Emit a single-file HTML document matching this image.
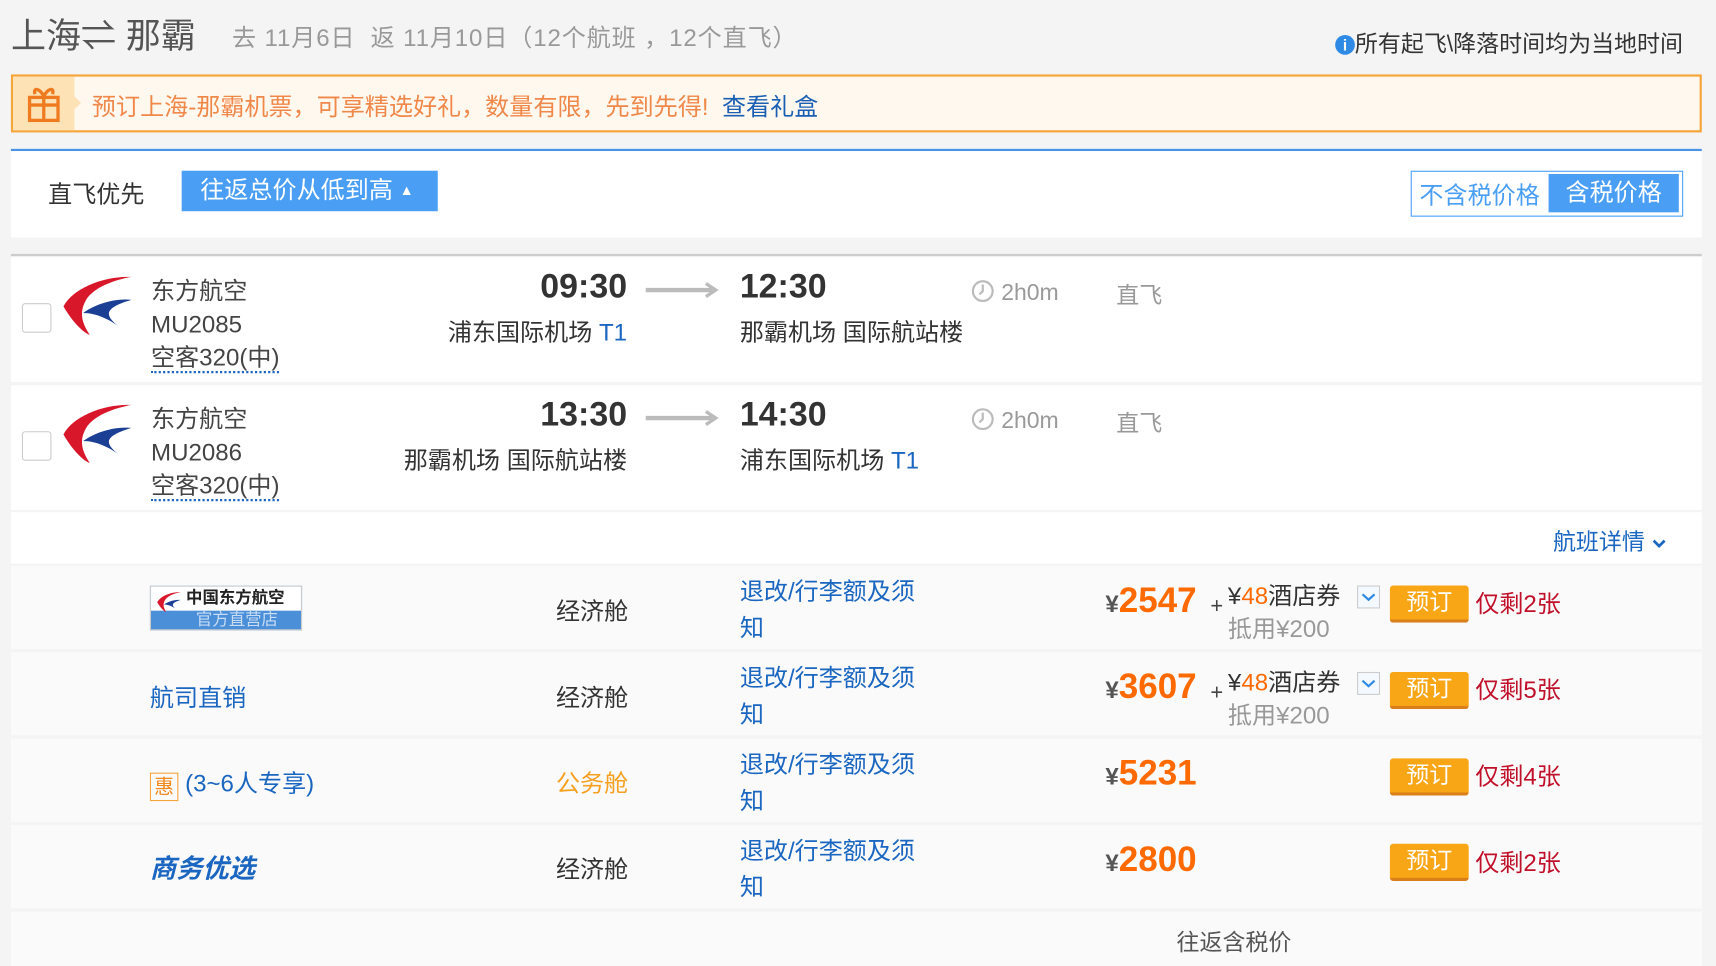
<!DOCTYPE html>
<html><head><meta charset="utf-8"><style>
html,body{margin:0;padding:0;width:1716px;height:966px;overflow:hidden;background:#f4f4f4}
#w{position:absolute;left:0;top:0;width:1568px;height:883px;transform:scale(1.0944);transform-origin:0 0;font-family:"Liberation Sans","Noto Sans CJK SC",sans-serif;color:#333}
.a{position:absolute;white-space:nowrap}
.blue{color:#1a66c0}
.row{position:absolute;left:10px;width:1545px;background:#fff}
.sub{position:absolute;left:10px;width:1545px;background:#fafafa;height:76px}
.btn{position:absolute;left:1270px;width:72px;height:31px;background:#f9a616;border-bottom:3px solid #d9801a;border-radius:3px;color:#fff;font-size:21px;text-align:center;line-height:32px}
.left{position:absolute;left:1348px;color:#c0102a;font-size:21px}
.price{position:absolute;left:1010px;font-weight:bold;color:#ff6a00;font-size:32px}
.price b{font-size:22px;color:#555}
.chk{position:absolute;left:1240px;width:19px;height:19px;border:1px solid #ccc;background:#f4f9ff}
</style></head><body><div id="w">
<div class="a" style="left:10px;top:8px;font-size:32px;color:#555">上海⇌ 那霸</div>
<div class="a" style="left:212px;top:17px;font-size:22px;color:#999;letter-spacing:0.8px">去 11月6日 &nbsp;返 11月10日（12个航班 ，12个直飞）</div>
<div class="a" style="left:1220px;top:24px;font-size:21px;color:#333"><span style="display:inline-block;width:18px;height:18px;border-radius:50%;background:#2f8ae5;color:#fff;font-size:14px;text-align:center;line-height:18px;font-weight:bold;vertical-align:1px">i</span>所有起飞\降落时间均为当地时间</div>
<div class="a" style="left:10px;top:68px;width:1541px;height:49px;border:2px solid #f5a53a;background:#fff8ee"></div>
<div class="a" style="left:12px;top:70px;width:56px;height:49px;background:#fde2b5"></div>
<div class="a" style="left:68px;top:88px;width:0;height:0;border-top:6px solid transparent;border-bottom:6px solid transparent;border-left:6px solid #fde2b5"></div>
<svg class="a" style="left:24px;top:76px" width="32" height="36" viewBox="0 0 32 36"><g fill="none" stroke="#f07a20" stroke-width="3"><rect x="3" y="13" width="26" height="21"/><line x1="3" y1="20" x2="29" y2="20"/><line x1="16" y1="13" x2="16" y2="34"/><path d="M16 12C12 4 6 4 8 10M16 12C20 4 26 4 24 10"/></g></svg>
<div class="a" style="left:84px;top:80px;font-size:22px;color:#f0884a">预订上海-那霸机票，可享精选好礼，数量有限，先到先得! &nbsp;<span class="blue" style="color:#1a5fb4">查看礼盒</span></div>
<div class="a" style="left:10px;top:136px;width:1545px;height:79px;background:#fff;border-top:2px solid #4a93e6"></div>
<div class="a" style="left:44px;top:160px;font-size:22px">直飞优先</div>
<div class="a" style="left:166px;top:156px;width:234px;height:37px;background:#4a9ff5;color:#fff;font-size:22px;line-height:35px;padding-left:17px;box-sizing:border-box">往返总价从低到高 <span style="font-size:13px;position:relative;top:-3px">▲</span></div>
<div class="a" style="left:1289px;top:156px;width:247px;height:40px;border:1px solid #4a9ff5;background:#fff"></div>
<div class="a" style="left:1297px;top:161px;font-size:22px;color:#4a9ff5">不含税价格</div>
<div class="a" style="left:1415px;top:159px;width:119px;height:35px;background:#4a9ff5;color:#fff;font-size:22px;line-height:33px;text-align:center">含税价格</div>
<div class="a" style="left:10px;top:232px;width:1545px;height:2px;background:#ccc"></div>
<div class="row" style="top:235px;height:114px"></div>
<div class="row" style="top:352px;height:114px"></div>
<div class="row" style="top:468px;height:47px"></div>
<div class="sub" style="top:517px"></div><div class="sub" style="top:596px"></div><div class="sub" style="top:675px"></div><div class="sub" style="top:754px"></div><div class="sub" style="top:833px;height:50px"></div>

<div class="a" style="left:20px;top:277px;width:25px;height:25px;border:1px solid #ccc;border-radius:3px;background:#fff"></div>
<div class="a" style="left:20px;top:394px;width:25px;height:25px;border:1px solid #ccc;border-radius:3px;background:#fff"></div>
<svg class="a" style="left:54px;top:250px" width="68" height="58" viewBox="0 0 68 58"><path d="M66 3C40 2 12 14 4 30c8 14 18 24 24 26C20 44 18 34 26 22 34 12 50 6 66 3Z" fill="#d9172a"/><path d="M66 24C48 22 30 30 22 36c12 0 24 6 32 12C42 38 40 32 66 24Z" fill="#1b3f94"/></svg>
<svg class="a" style="left:54px;top:367px" width="68" height="58" viewBox="0 0 68 58"><path d="M66 3C40 2 12 14 4 30c8 14 18 24 24 26C20 44 18 34 26 22 34 12 50 6 66 3Z" fill="#d9172a"/><path d="M66 24C48 22 30 30 22 36c12 0 24 6 32 12C42 38 40 32 66 24Z" fill="#1b3f94"/></svg>
<div class="a" style="left:138px;top:251px;font-size:22px;line-height:30.5px;color:#444">东方航空<br>MU2085<br><span style="border-bottom:2px dotted #1a66c0">空客320(中)</span></div>
<div class="a" style="left:138px;top:368px;font-size:22px;line-height:30.5px;color:#444">东方航空<br>MU2086<br><span style="border-bottom:2px dotted #1a66c0">空客320(中)</span></div>
<div class="a" style="left:373px;width:200px;text-align:right;top:244px;font-size:31px;font-weight:bold">09:30</div>
<div class="a" style="left:303px;width:270px;text-align:right;top:286px;font-size:22px">浦东国际机场 <span class="blue">T1</span></div>
<div class="a" style="left:373px;width:200px;text-align:right;top:361px;font-size:31px;font-weight:bold">13:30</div>
<div class="a" style="left:293px;width:280px;text-align:right;top:403px;font-size:22px">那霸机场 国际航站楼</div>
<svg class="a" style="left:589px;top:257px" width="68" height="16"><path d="M1 8H62" stroke="#bbb" stroke-width="4"/><path d="M56 2L65 8L56 14" fill="none" stroke="#bbb" stroke-width="3"/></svg>
<svg class="a" style="left:589px;top:374px" width="68" height="16"><path d="M1 8H62" stroke="#bbb" stroke-width="4"/><path d="M56 2L65 8L56 14" fill="none" stroke="#bbb" stroke-width="3"/></svg>
<div class="a" style="left:676px;top:244px;font-size:31px;font-weight:bold">12:30</div>
<div class="a" style="left:676px;top:286px;font-size:22px">那霸机场 国际航站楼</div>
<div class="a" style="left:676px;top:361px;font-size:31px;font-weight:bold">14:30</div>
<div class="a" style="left:676px;top:403px;font-size:22px">浦东国际机场 <span class="blue">T1</span></div>
<div class="a" style="left:887px;top:255px;font-size:21px;color:#999"><svg width="22" height="22" style="vertical-align:-3px"><circle cx="11" cy="11" r="9" fill="none" stroke="#bbb" stroke-width="2"/><path d="M11 5V11L8 14" fill="none" stroke="#bbb" stroke-width="2"/></svg> 2h0m</div>
<div class="a" style="left:887px;top:372px;font-size:21px;color:#999"><svg width="22" height="22" style="vertical-align:-3px"><circle cx="11" cy="11" r="9" fill="none" stroke="#bbb" stroke-width="2"/><path d="M11 5V11L8 14" fill="none" stroke="#bbb" stroke-width="2"/></svg> 2h0m</div>
<div class="a" style="left:1020px;top:254px;font-size:21px;color:#999">直飞</div>
<div class="a" style="left:1020px;top:371px;font-size:21px;color:#999">直飞</div>
<div class="a blue" style="left:1419px;top:479px;font-size:21px">航班详情 <svg width="14" height="10"><path d="M2 2L7 7L12 2" fill="none" stroke="#1a66c0" stroke-width="2.5"/></svg></div>

<div class="a" style="left:137px;top:535px;width:139px;height:41px;background:#4a8fd8;border:1px solid #ccc;box-sizing:border-box"><div style="background:#fff;height:22px;font-size:15px;font-weight:bold;color:#222;padding-left:32px;line-height:22px">中国东方航空</div><div style="color:#c8dcf5;font-size:15px;text-align:center;line-height:17px;padding-left:20px">官方直营店</div><svg style="position:absolute;left:3px;top:4px" width="26" height="20" viewBox="0 0 68 58"><path d="M66 3C40 2 12 14 4 30c8 14 18 24 24 26C20 44 18 34 26 22 34 12 50 6 66 3Z" fill="#d9172a"/><path d="M66 24C48 22 30 30 22 36c12 0 24 6 32 12C42 38 40 32 66 24Z" fill="#1b3f94"/></svg></div>
<div class="a blue" style="left:137px;top:620px;font-size:22px">航司直销</div>
<div class="a blue" style="left:137px;top:698px;font-size:22px"><span style="display:inline-block;width:24px;height:24px;border:1px solid #f5a53a;color:#f08a20;font-size:18px;line-height:24px;text-align:center;vertical-align:-2px">惠</span> (3~6人专享)</div>
<div class="a" style="left:137px;top:774px;font-size:24px;font-weight:bold;color:#1a66c0;font-style:italic">商务优选</div>
<div class="a" style="left:508px;top:541px;font-size:22px">经济舱</div>
<div class="a" style="left:508px;top:620px;font-size:22px">经济舱</div>
<div class="a" style="left:508px;top:698px;font-size:22px;color:#f5a020">公务舱</div>
<div class="a" style="left:508px;top:777px;font-size:22px">经济舱</div>
<div class="a blue" style="left:676px;top:524px;font-size:22px;line-height:33px">退改/行李额及须<br>知</div>
<div class="a blue" style="left:676px;top:603px;font-size:22px;line-height:33px">退改/行李额及须<br>知</div>
<div class="a blue" style="left:676px;top:682px;font-size:22px;line-height:33px">退改/行李额及须<br>知</div>
<div class="a blue" style="left:676px;top:761px;font-size:22px;line-height:33px">退改/行李额及须<br>知</div>
<div class="price" style="top:530px"><b>¥</b>2547</div>
<div class="price" style="top:609px"><b>¥</b>3607</div>
<div class="price" style="top:688px"><b>¥</b>5231</div>
<div class="price" style="top:767px"><b>¥</b>2800</div>
<div class="a" style="left:1106px;top:543px;font-size:20px;color:#444">+</div>
<div class="a" style="left:1106px;top:622px;font-size:20px;color:#444">+</div>
<div class="a" style="left:1122px;top:530px;font-size:22px;line-height:30px">¥<span style="color:#ff6a00">48</span>酒店券<br><span style="color:#999">抵用¥200</span></div>
<div class="a" style="left:1122px;top:609px;font-size:22px;line-height:30px">¥<span style="color:#ff6a00">48</span>酒店券<br><span style="color:#999">抵用¥200</span></div>
<div class="chk" style="top:535px"><svg width="19" height="19"><path d="M4 7L9.5 12L15 7" fill="none" stroke="#2f8ae5" stroke-width="2"/></svg></div>
<div class="chk" style="top:614px"><svg width="19" height="19"><path d="M4 7L9.5 12L15 7" fill="none" stroke="#2f8ae5" stroke-width="2"/></svg></div>
<div class="btn" style="top:535px">预订</div><div class="btn" style="top:614px">预订</div><div class="btn" style="top:693px">预订</div><div class="btn" style="top:771px">预订</div>
<div class="left" style="top:534px;font-size:22px">仅剩2张</div><div class="left" style="top:613px;font-size:22px">仅剩5张</div><div class="left" style="top:692px;font-size:22px">仅剩4张</div><div class="left" style="top:771px;font-size:22px">仅剩2张</div>
<div class="a" style="left:1075px;top:845px;font-size:21px;color:#555">往返含税价</div>
</div></body></html>
